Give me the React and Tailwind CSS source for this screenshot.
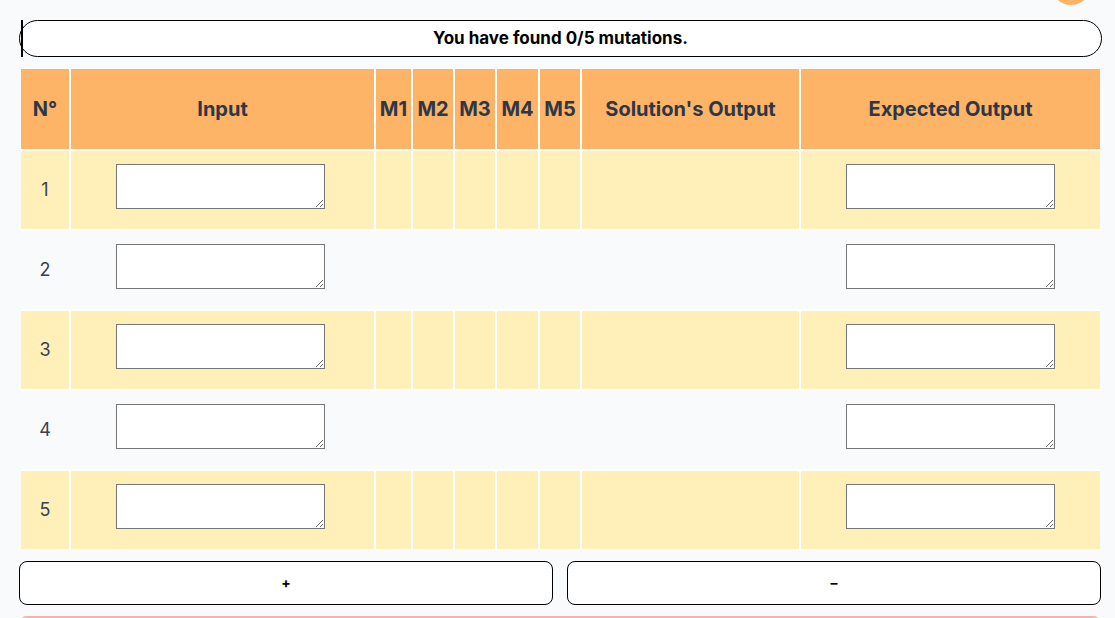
const COLS = ["N°", "Input", "M1", "M2", "M3", "M4", "M5", "Solution's Output", "Expected Output"];
const GRID = "grid grid-cols-[48px_303px_35px_40px_40px_41px_40px_217px_299px] gap-x-[2px]";

function Box({ shift }) {
  return (
    <textarea
      className={`mb-[7px] block h-[45px] w-[209px] resize border border-[#767676] bg-white ${shift ? "mr-[4px]" : ""}`}
    />
  );
}

function Row({ n }) {
  const odd = n % 2 === 1;
  const cell = `${odd ? "bg-[#fef0b8]" : ""} flex h-[78px] items-center justify-center`;
  return (
    <div className={`${GRID} ${odd ? "bg-white" : "bg-[#f8fafc]"}`}>
      <div className={`${cell} text-lg text-[#374151]`}>{n}</div>
      <div className={cell}>
        <Box shift />
      </div>
      {[1, 2, 3, 4, 5].map((m) => (
        <div key={m} className={cell} />
      ))}
      <div className={cell} />
      <div className={cell}>
        <Box />
      </div>
    </div>
  );
}

export default function App() {
  return (
    <div
      className="relative min-h-[618px] overflow-hidden bg-[#f8fafc] px-[19px] pt-5"
      style={{ fontFamily: "Inter, 'Noto Sans', sans-serif" }}
    >
      <div className="absolute right-[24px] top-[-35px] h-10 w-10 rounded-full bg-[#feb466]" />

      <div className="relative flex h-[37px] w-[1083px] items-center justify-center rounded-full border border-black bg-white text-[17px] font-bold text-black">
        You have found 0/5 mutations.
        <span className="absolute left-[1px] top-[-1px] h-[37px] w-[2px] bg-black" />
      </div>

      <div className="mt-3 ml-[2px] flex w-[1079px] flex-col gap-y-[2px] bg-white">
        <div className={`${GRID} bg-white`}>
          {COLS.map((c) => (
            <div
              key={c}
              className="flex h-[80px] items-center justify-center bg-[#feb466] text-[20px] font-bold text-[#2d3748]"
            >
              {c}
            </div>
          ))}
        </div>
        {[1, 2, 3, 4, 5].map((n) => (
          <Row key={n} n={n} />
        ))}
      </div>

      <div className="mt-3 flex w-[1082px] gap-[14px]">
        <button className="h-11 flex-1 rounded-lg border border-black bg-white text-sm font-bold">+</button>
        <button className="h-11 flex-1 rounded-lg border border-black bg-white text-sm font-bold">–</button>
      </div>

      <div className="mt-[11px] h-10 w-[1082px] rounded-t-lg bg-[#fcb1a8]" />
    </div>
  );
}
